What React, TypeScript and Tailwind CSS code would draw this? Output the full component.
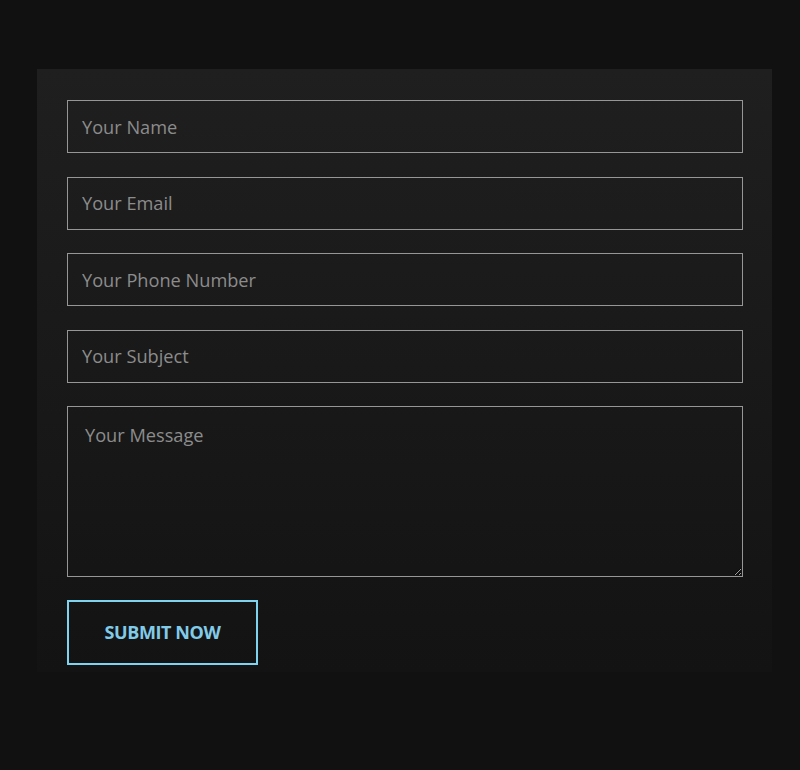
import { useState } from 'react';

const fieldClass =
  'w-full h-[53px] bg-transparent border border-[#969696] px-[14px] text-[18.2px] text-[#cfcfcf] placeholder:text-[#8c8c8c] outline-none';

export default function App() {
  const [values, setValues] = useState({ name: '', email: '', phone: '', subject: '', message: '' });

  const update = (key: keyof typeof values) => (e: React.ChangeEvent<HTMLInputElement | HTMLTextAreaElement>) =>
    setValues({ ...values, [key]: e.target.value });

  return (
    <div className="min-h-[770px] w-[800px] bg-[#111111] pt-[69px] pl-[37px]" style={{ fontFamily: '"Open Sans", sans-serif' }}>
      <form
        className="w-[735px] h-[603px] bg-gradient-to-b from-[#1f1f1f] to-[#131313] px-[30px] pt-[31px] flex flex-col"
        onSubmit={(e) => e.preventDefault()}
      >
        <div className="flex flex-col gap-[23.5px] w-[676px]">
          <input className={fieldClass} placeholder="Your Name" value={values.name} onChange={update('name')} />
          <input className={fieldClass} placeholder="Your Email" value={values.email} onChange={update('email')} />
          <input className={fieldClass} placeholder="Your Phone Number" value={values.phone} onChange={update('phone')} />
          <input className={fieldClass} placeholder="Your Subject" value={values.subject} onChange={update('subject')} />
          <textarea
            className="w-full h-[171px] bg-transparent border border-[#969696] px-[17px] pt-[15px] text-[18.2px] text-[#cfcfcf] placeholder:text-[#8c8c8c] outline-none"
            placeholder="Your Message"
            value={values.message}
            onChange={update('message')}
          />
        </div>

        <button
          type="submit"
          className="mt-[23px] w-[191px] h-[65px] border-2 border-[#7fd3ef] text-[#82cbe8] text-[18px] font-bold tracking-[-0.4px] uppercase"
        >
          Submit Now
        </button>
      </form>
    </div>
  );
}
